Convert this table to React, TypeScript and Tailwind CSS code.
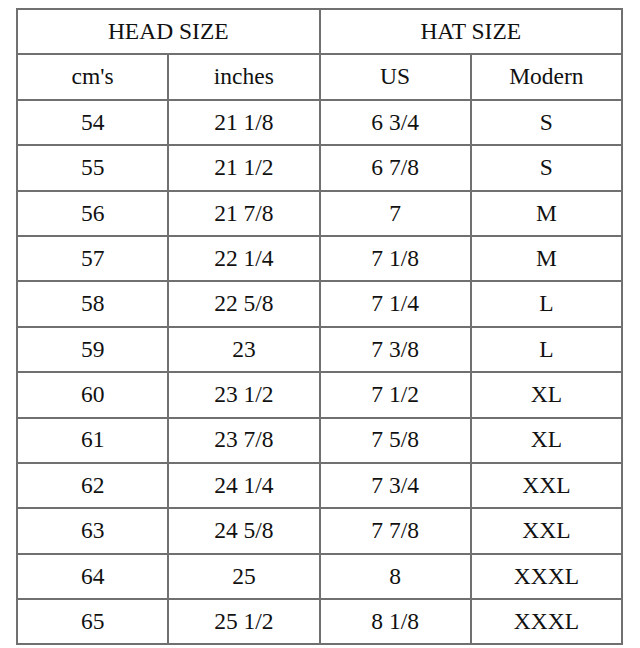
import React from "react";

const rows: [string, string, string, string][] = [
  ["54", "21 1/8", "6 3/4", "S"],
  ["55", "21 1/2", "6 7/8", "S"],
  ["56", "21 7/8", "7", "M"],
  ["57", "22 1/4", "7 1/8", "M"],
  ["58", "22 5/8", "7 1/4", "L"],
  ["59", "23", "7 3/8", "L"],
  ["60", "23 1/2", "7 1/2", "XL"],
  ["61", "23 7/8", "7 5/8", "XL"],
  ["62", "24 1/4", "7 3/4", "XXL"],
  ["63", "24 5/8", "7 7/8", "XXL"],
  ["64", "25", "8", "XXXL"],
  ["65", "25 1/2", "8 1/8", "XXXL"],
];

const cell = "border-2 border-[#707070] text-center font-normal p-0 h-[45.4px]";

const App = () => {
  return (
    <div
      className="w-[640px] h-[648px] bg-white pt-[8px] pl-[16px] text-[#111] text-[23.5px] leading-none"
      style={{ fontFamily: '"Liberation Serif", "Times New Roman", serif' }}
    >
      <table className="w-[607px] border-collapse table-fixed">
        <thead>
          <tr>
            <th colSpan={2} className={cell}>
              HEAD SIZE
            </th>
            <th colSpan={2} className={cell}>
              HAT SIZE
            </th>
          </tr>
          <tr>
            <th className={cell}>cm's</th>
            <th className={cell}>inches</th>
            <th className={cell}>US</th>
            <th className={cell}>Modern</th>
          </tr>
        </thead>
        <tbody>
          {rows.map((r) => (
            <tr key={r[0]}>
              {r.map((v, i) => (
                <td key={i} className={cell}>
                  {v}
                </td>
              ))}
            </tr>
          ))}
        </tbody>
      </table>
    </div>
  );
};

export default App;
